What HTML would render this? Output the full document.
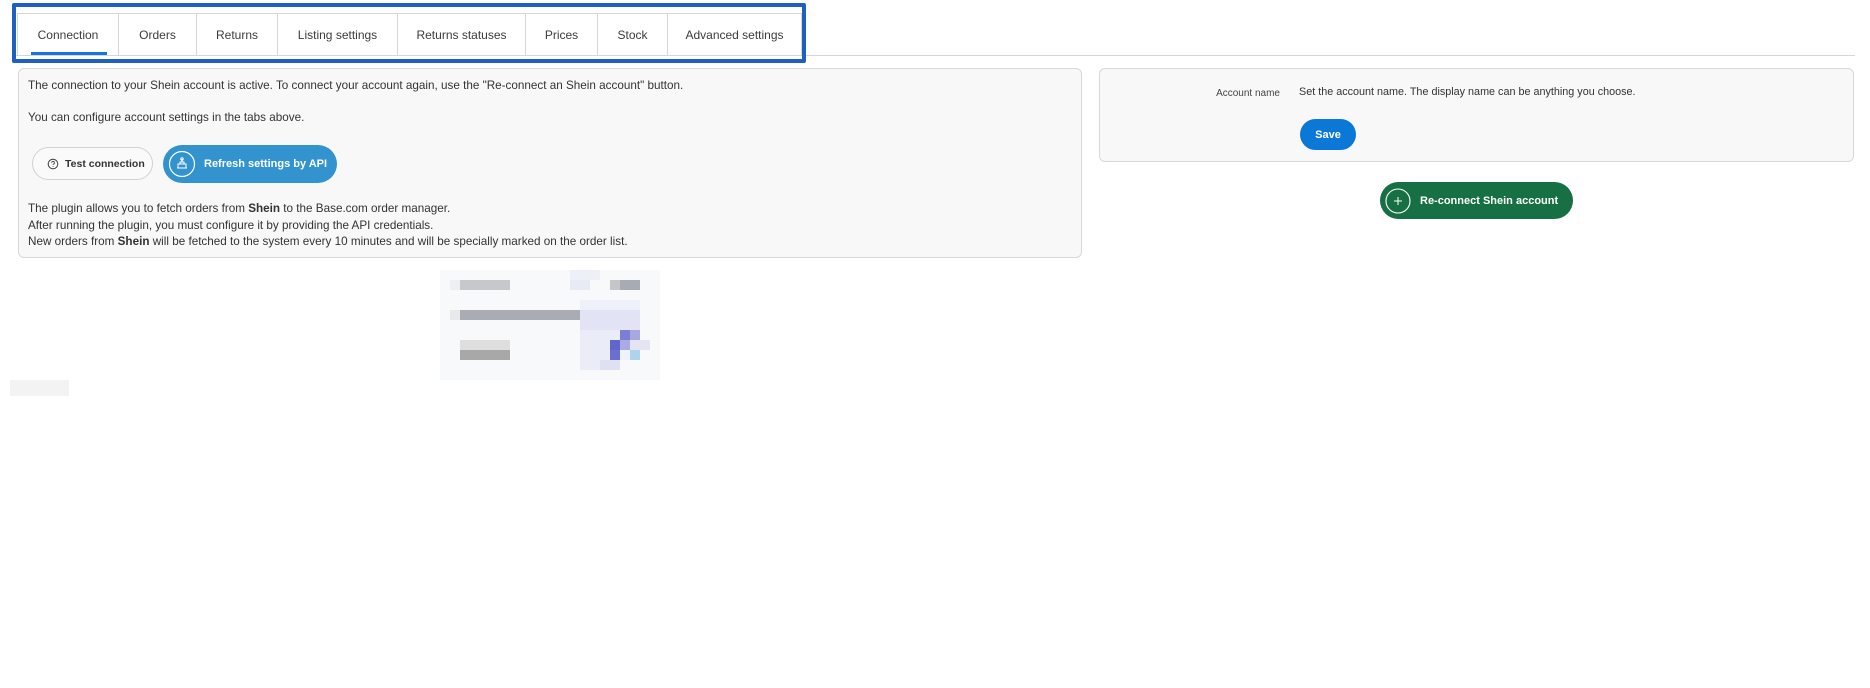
<!DOCTYPE html>
<html><head><meta charset="utf-8"><style>
*{box-sizing:border-box;margin:0;padding:0}
body{width:1870px;height:688px;background:#fff;font-family:"Liberation Sans",sans-serif;color:#333;position:relative;overflow:hidden}
.abs{position:absolute}
.tabline{left:14px;top:55px;width:1841px;height:1px;background:#d4d6da}
.tabs{left:17px;top:13px;height:42px;border:1px solid #d4d6da;border-bottom:none;display:flex}
.tab{height:41px;border-right:1px solid #d4d6da;font-size:12px;color:#3c3c3c;display:flex;align-items:center;justify-content:center;position:relative;white-space:nowrap}
.hl{left:12px;top:3px;width:794px;height:60px;border:4px solid #1f5fbf;border-radius:2px}
.panel{background:#f8f8f8;border:1px solid #d6d8dc;border-radius:6px}
.t{font-size:11.7px;color:#333;white-space:nowrap}
.btn{border-radius:20px;display:flex;align-items:center;font-size:11px;font-weight:bold;white-space:nowrap}
.px{position:absolute;width:10px;height:10px}
</style></head><body>
<div class="abs tabline"></div>
<div class="abs tabs">
<div class="tab" style="width:101px;background:#fff">Connection<div class="abs" style="left:13px;bottom:0;width:76px;height:3px;background:#1a73d9"></div></div>
<div class="tab" style="width:78px">Orders</div>
<div class="tab" style="width:81px">Returns</div>
<div class="tab" style="width:120px">Listing settings</div>
<div class="tab" style="width:128px">Returns statuses</div>
<div class="tab" style="width:72px">Prices</div>
<div class="tab" style="width:70px">Stock</div>
<div class="tab" style="width:133px;border-right:none">Advanced settings</div>
</div>
<div class="abs hl"></div>

<div class="abs panel" style="left:18px;top:68px;width:1064px;height:190px"></div>
<div class="abs t" style="left:28px;top:79px">The connection to your Shein account is active. To connect your account again, use the "Re-connect an Shein account" button.</div>
<div class="abs t" style="left:28px;top:111px">You can configure account settings in the tabs above.</div>
<div class="abs btn" style="left:32px;top:147px;width:121px;height:33px;border:1px solid #cfd2d6;background:#fafafa;color:#333;font-size:10.5px;padding-left:14px">
<svg width="12" height="12" viewBox="0 0 12 12" style="margin-right:6px"><circle cx="6" cy="6" r="4.8" fill="none" stroke="#444" stroke-width="1"/><path d="M4.6 4.8a1.4 1.4 0 1 1 1.9 1.3c-.4.2-.5.4-.5.8" fill="none" stroke="#444" stroke-width=".9"/><circle cx="6" cy="8.4" r=".5" fill="#444"/></svg>Test connection</div>
<div class="abs btn" style="left:163px;top:145px;width:174px;height:38px;background:#3393cf;color:#fff;padding-left:5px">
<svg width="28" height="28" viewBox="0 0 28 28" style="margin-right:8px"><circle cx="14" cy="14" r="12.5" fill="none" stroke="#fff" stroke-width="1.2"/><path d="M9 18h10M10 18v-4h8v4M12 14v-2h4v2M14 12V9" fill="none" stroke="#fff" stroke-width="1"/><circle cx="14" cy="9" r="1.2" fill="none" stroke="#fff"/></svg>Refresh settings by API</div>
<div class="abs t" style="left:28px;top:201px;line-height:16.6px">The plugin allows you to fetch orders from <b>Shein</b> to the Base.com order manager.<br>After running the plugin, you must configure it by providing the API credentials.<br>New orders from <b>Shein</b> will be fetched to the system every 10 minutes and will be specially marked on the order list.</div>

<div class="abs panel" style="left:1099px;top:68px;width:755px;height:94px"></div>
<div class="abs" style="left:1180px;top:88px;width:100px;text-align:right;font-size:10px;color:#444">Account name</div>
<div class="abs t" style="left:1299px;top:86px;font-size:10.8px">Set the account name. The display name can be anything you choose.</div>
<div class="abs btn" style="left:1300px;top:119px;width:56px;height:31px;background:#0b78d8;color:#fff;justify-content:center;font-size:11px">Save</div>
<div class="abs btn" style="left:1380px;top:182px;width:193px;height:37px;background:#167043;color:#fff;padding-left:5px;font-size:11px">
<svg width="26" height="26" viewBox="0 0 26 26" style="margin-right:9px"><circle cx="13" cy="13" r="12" fill="none" stroke="#fff" stroke-width="1.1"/><path d="M13 9v8M9 13h8" stroke="#fff" stroke-width="1"/></svg>Re-connect Shein account</div>

<div class="abs" style="left:440px;top:270px;width:220px;height:110px;background:#f8f9fb">
<div class="px" style="left:130px;top:0;width:30px;background:#eef0f8"></div>
<div class="px" style="left:10px;top:10px;background:#eeeff1"></div>
<div class="px" style="left:20px;top:10px;width:50px;background:#c6c8cc"></div>
<div class="px" style="left:130px;top:10px;width:20px;background:#e8eaf6"></div>
<div class="px" style="left:170px;top:10px;background:#c4c6ca"></div>
<div class="px" style="left:180px;top:10px;width:20px;background:#a7abb3"></div>
<div class="px" style="left:140px;top:30px;width:60px;background:#eef0fa"></div>
<div class="px" style="left:10px;top:40px;background:#e8e9ed"></div>
<div class="px" style="left:20px;top:40px;width:120px;background:#a9acb3"></div>
<div class="px" style="left:140px;top:40px;width:60px;height:20px;background:#e2e4f5"></div>
<div class="px" style="left:140px;top:60px;width:40px;height:40px;background:#eaecf8"></div>
<div class="px" style="left:180px;top:60px;background:#7a7fd6"></div>
<div class="px" style="left:190px;top:60px;background:#a6a9e0"></div>
<div class="px" style="left:20px;top:70px;width:50px;background:#dedede"></div>
<div class="px" style="left:170px;top:70px;background:#6166cc"></div>
<div class="px" style="left:180px;top:70px;background:#a9abe2"></div>
<div class="px" style="left:190px;top:70px;width:20px;background:#e4e4f2"></div>
<div class="px" style="left:20px;top:80px;width:50px;background:#a8a8a8"></div>
<div class="px" style="left:170px;top:80px;background:#6a70cf"></div>
<div class="px" style="left:180px;top:80px;background:#eef3fb"></div>
<div class="px" style="left:190px;top:80px;background:#aed3ef"></div>
<div class="px" style="left:160px;top:90px;width:20px;background:#dfe0f2"></div>
</div>
<div class="abs" style="left:10px;top:380px;width:59px;height:16px;background:#f3f3f3"></div>
</body></html>
